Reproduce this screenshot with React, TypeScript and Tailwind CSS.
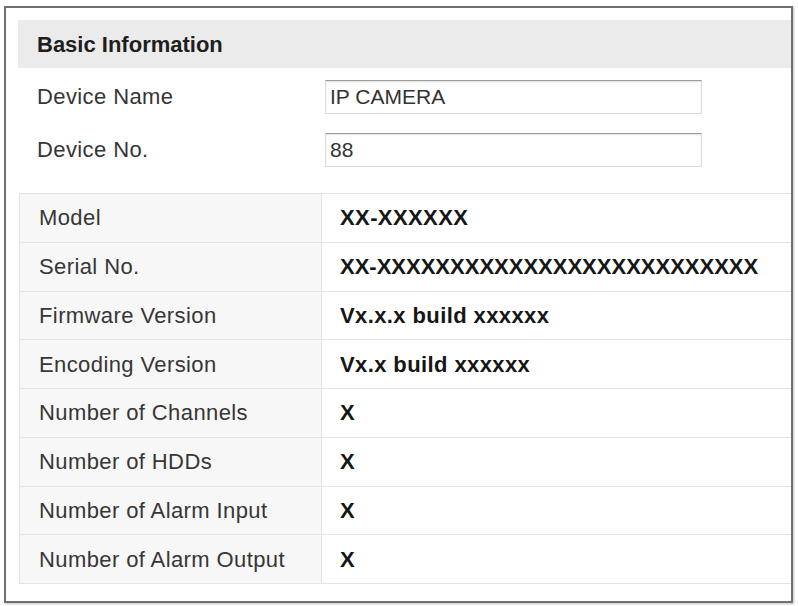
const rows: Array<[string, string]> = [
  ['Model', 'XX-XXXXXX'],
  ['Serial No.', 'XX-XXXXXXXXXXXXXXXXXXXXXXXXXX'],
  ['Firmware Version', 'Vx.x.x build xxxxxx'],
  ['Encoding Version', 'Vx.x build xxxxxx'],
  ['Number of Channels', 'X'],
  ['Number of HDDs', 'X'],
  ['Number of Alarm Input', 'X'],
  ['Number of Alarm Output', 'X'],
]

function FieldRow({ label, value }: { label: string; value: string }) {
  return (
    <div className="flex items-center h-[53px]">
      <div className="w-[307px] pl-[19px] text-[22px] tracking-[0.4px] text-[#363636]">{label}</div>
      <div className="w-[377px] h-[34px] bg-white border border-[#dcdcdc] border-t-[#9a9a9a] shadow-[inset_0_1px_2px_rgba(0,0,0,0.12)] flex items-center pl-[4px] text-[21px] text-[#333]">
        {value}
      </div>
    </div>
  )
}

export default function App() {
  return (
    <div className="w-[798px] h-[606px] bg-white pt-[6px] pl-[4px]" style={{ fontFamily: '"Liberation Sans", Arial, sans-serif' }}>
      <div className="w-[789px] h-[597px] border-2 border-[#707070] pt-[12px] pl-[12px] shadow-[1px_1px_2px_rgba(0,0,0,0.25)]">
        <div className="h-[48px] bg-[#ebebeb] flex items-center pl-[19px] text-[22px] font-bold text-[#1e1e1e]">
          Basic Information
        </div>
        <div className="pt-[2px]">
          <FieldRow label="Device Name" value="IP CAMERA" />
          <FieldRow label="Device No." value="88" />
        </div>
        <div className="mt-[17px] ml-[1px] border-t border-l border-[#e4e4e4]">
          {rows.map(([label, value]) => (
            <div key={label} className="flex h-[48.75px] border-b border-[#e4e4e4]">
              <div className="w-[302px] bg-[#f7f7f7] border-r border-[#e4e4e4] flex items-center pl-[19px] text-[22px] tracking-[0.4px] text-[#363636]">
                {label}
              </div>
              <div
                className={
                  label === 'Serial No.'
                    ? 'flex-1 flex items-center pl-[18px] text-[22px] font-bold tracking-[0px] text-[#161616]'
                    : 'flex-1 flex items-center pl-[18px] text-[22px] font-bold tracking-[0.4px] text-[#161616]'
                }
              >
                {value}
              </div>
            </div>
          ))}
        </div>
      </div>
    </div>
  )
}
